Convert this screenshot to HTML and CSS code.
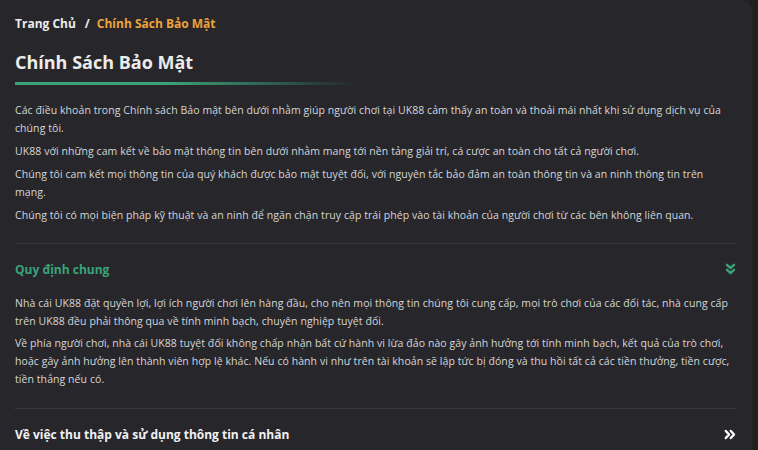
FILE: index.html
```html
<!DOCTYPE html>
<html lang="vi">
<head>
<meta charset="utf-8">
<title>Chính Sách Bảo Mật</title>
<link rel="stylesheet" href="styles.css">
</head>
<body>
<main class="card">
  <nav class="crumbs">
    <span class="crumb-home">Trang Chủ</span>
    <span class="crumb-sep">/</span>
    <span class="crumb-current">Chính Sách Bảo Mật</span>
  </nav>
  <h1 class="title">Chính Sách Bảo Mật</h1>
  <div class="title-bar"></div>
  <section class="intro">
    <p>Các điều khoản trong Chính sách Bảo mật bên dưới nhằm giúp người chơi tại UK88 cảm thấy an toàn và thoải mái nhất khi sử dụng dịch vụ của chúng tôi.</p>
    <p>UK88 với những cam kết về bảo mật thông tin bên dưới nhằm mang tới nền tảng giải trí, cá cược an toàn cho tất cả người chơi.</p>
    <p>Chúng tôi cam kết mọi thông tin của quý khách được bảo mật tuyệt đối, với nguyên tắc bảo đảm an toàn thông tin và an ninh thông tin trên mạng.</p>
    <p>Chúng tôi có mọi biện pháp kỹ thuật và an ninh để ngăn chặn truy cập trái phép vào tài khoản của người chơi từ các bên không liên quan.</p>
  </section>
  <section class="acc open">
    <div class="acc-head">
      <h2 class="acc-title">Quy định chung</h2>
      <svg class="acc-icon" width="11" height="12" viewBox="0 0 11 12"><path d="M2 1.8 L5.5 5 L9 1.8 M2 6.8 L5.5 10 L9 6.8" fill="none" stroke="#3aa37a" stroke-width="2.4" stroke-linecap="round" stroke-linejoin="round"/></svg>
    </div>
    <div class="acc-body">
      <p>Nhà cái UK88 đặt quyền lợi, lợi ích người chơi lên hàng đầu, cho nên mọi thông tin chúng tôi cung cấp, mọi trò chơi của các đối tác, nhà cung cấp trên UK88 đều phải thông qua về tính minh bạch, chuyên nghiệp tuyệt đối.</p>
      <p>Về phía người chơi, nhà cái UK88 tuyệt đối không chấp nhận bất cứ hành vi lừa đảo nào gây ảnh hưởng tới tính minh bạch, kết quả của trò chơi, hoặc gây ảnh hưởng lên thành viên hợp lệ khác. Nếu có hành vi như trên tài khoản sẽ lập tức bị đóng và thu hồi tất cả các tiền thưởng, tiền cược, tiền thắng nếu có.</p>
    </div>
  </section>
  <section class="acc">
    <div class="acc-head">
      <h2 class="acc-title">Về việc thu thập và sử dụng thông tin cá nhân</h2>
      <svg class="acc-icon" width="12" height="11" viewBox="0 0 12 11"><path d="M1.8 2 L5 5.5 L1.8 9 M6.8 2 L10 5.5 L6.8 9" fill="none" stroke="#ffffff" stroke-width="2.4" stroke-linecap="round" stroke-linejoin="round"/></svg>
    </div>
  </section>
</main>
</body>
</html>
```
FILE: styles.css
```css
html, body {
  margin: 0;
  padding: 0;
  background: #202023;
  height: 100%;
  overflow: hidden;
}
body {
  font-family: "Open Sans", "Noto Sans", sans-serif;
  color: #d6d6d8;
}
.card {
  width: 752px;
  box-sizing: border-box;
  min-height: 450px;
  background: #27272b;
  border-top-right-radius: 10px;
  padding: 15px 16px 0 15px;
}
.crumbs {
  display: flex;
  align-items: center;
  font-size: 12px;
  font-weight: 700;
  line-height: 18px;
}
.crumb-home { color: #ececec; }
.crumb-sep { color: #ececec; margin: 0 7px 0 9px; }
.crumb-current { color: #eea23a; }
.title {
  margin: 16px 0 0;
  font-size: 18px;
  font-weight: 700;
  line-height: 26px;
  color: #ececec;
}
.title-bar {
  margin-top: 7px;
  width: 340px;
  height: 3px;
  background: linear-gradient(90deg, #3aa37a 0%, #3aa37a 45%, rgba(58,163,122,0) 100%);
}
.intro {
  padding-top: 16px;
  padding-bottom: 14px;
  border-bottom: 1px solid #3a3a3e;
}
p {
  margin: 0 0 5px;
  font-size: 10.5px;
  line-height: 18px;
  letter-spacing: 0.07px;
}
.acc { border-bottom: 1px solid #3a3a3e; }
.acc:last-child { border-bottom: none; }
.acc-head {
  display: flex;
  align-items: center;
  justify-content: space-between;
  height: 50px;
}
.acc-title {
  margin: 0;
  font-size: 12px;
  font-weight: 700;
  color: #f2f2f2;
}
.acc.open .acc-title { color: #3aa37a; }
.acc-body { padding-bottom: 16px; }
.acc-body p { margin-bottom: 4px; }
```
